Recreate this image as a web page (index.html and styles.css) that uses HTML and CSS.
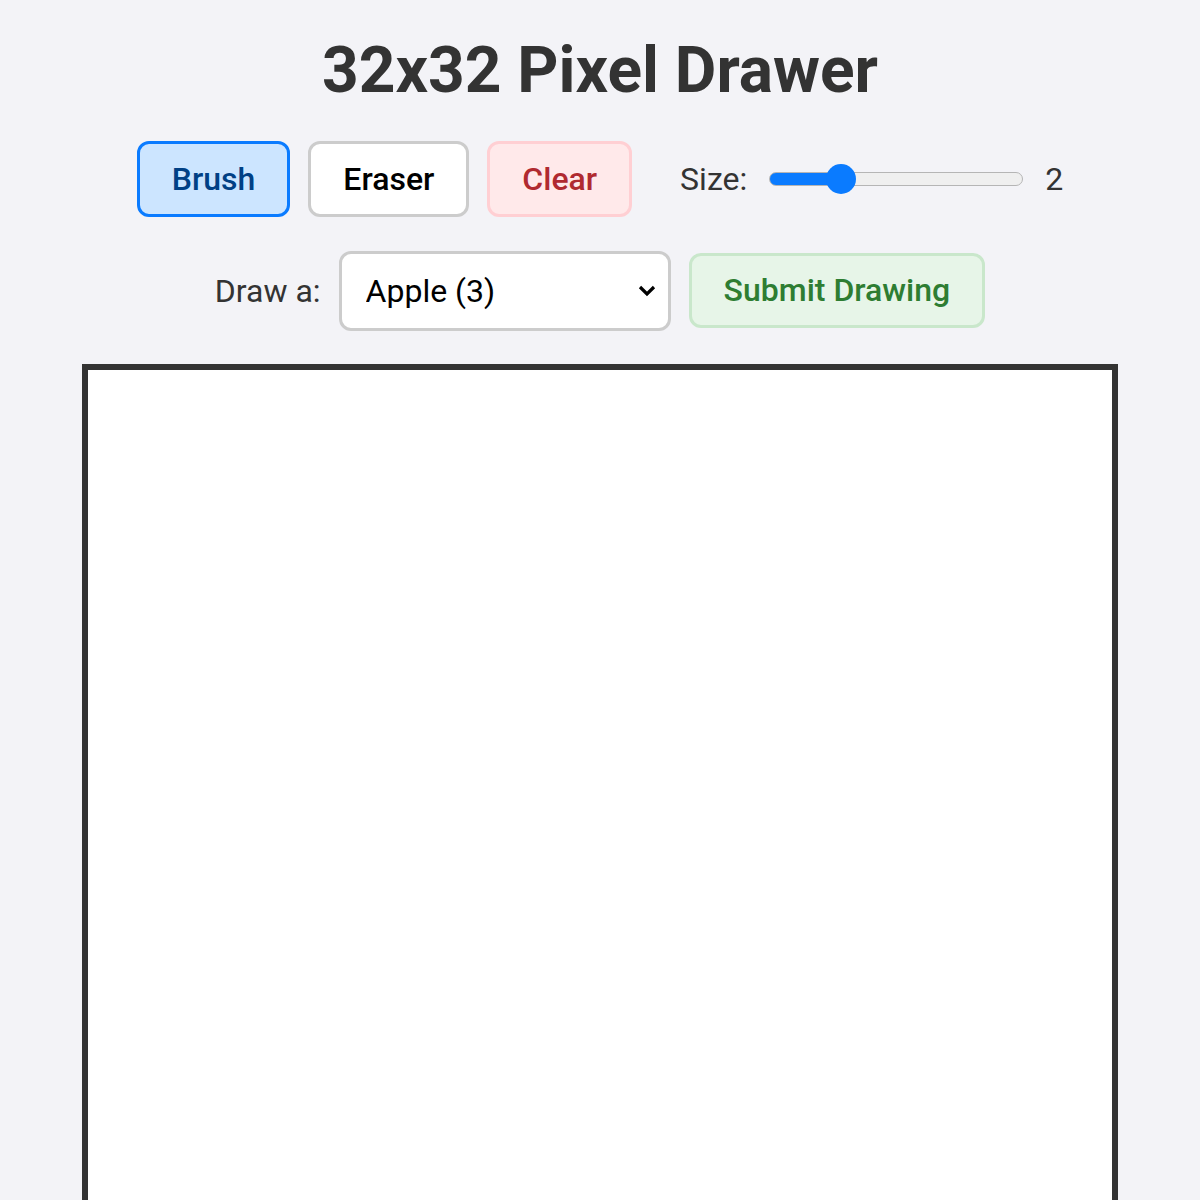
FILE: index.html
```html
<!DOCTYPE html>
<html lang="en">
<head>
    <meta charset="UTF-8">
    <meta name="viewport" content="width=device-width, initial-scale=1.0">
    <title>32x32 Pixel Drawer</title>
    <link rel="stylesheet" href="styles.css">
</head>
<body>
    <h1>32x32 Pixel Drawer</h1>

    <div class="controls">
        <button class="tool brush active">Brush</button>
        <button class="tool eraser">Eraser</button>
        <button class="tool clear">Clear</button>
        <div class="size-group">
            <label for="size">Size:</label>
            <input type="range" id="size" class="size-slider" min="1" max="5" value="2">
            <span class="size-value">2</span>
        </div>
    </div>

    <div class="controls prompt-row">
        <label for="target">Draw a:</label>
        <select id="target" class="target-select">
            <option>Apple (3)</option>
            <option>House (5)</option>
            <option>Smiley (2)</option>
        </select>
        <button class="tool submit">Submit Drawing</button>
    </div>

    <canvas id="board" class="board" width="32" height="32"></canvas>
</body>
</html>
```

FILE: styles.css
```css
:root {
    --page-bg: #f3f3f7;
    --ink: #333;
    --blue: #0a7bff;
}

body {
    margin: 0;
    background: var(--page-bg);
    color: var(--ink);
    font-family: Roboto, 'Noto Sans', sans-serif;
    display: flex;
    flex-direction: column;
    align-items: center;
}

h1 {
    font-size: 64px;
    font-weight: 700;
    line-height: 1.2;
    margin: 33px 0 31px;
    color: var(--ink);
}

.controls {
    display: flex;
    align-items: center;
    gap: 18px;
    font-size: 32px;
}

.prompt-row {
    margin-top: 34px;
}

.tool {
    font-family: inherit;
    font-size: 32px;
    font-weight: 500;
    line-height: 38px;
    padding: 16px 32px;
    border: 3px solid #ccc;
    border-radius: 12px;
    background: #fff;
    color: #000;
    cursor: pointer;
}

.brush.active {
    background: #cce5ff;
    border-color: var(--blue);
    color: #004085;
}

.clear {
    background: #ffe9ea;
    border-color: #ffcfd3;
    color: #b02a30;
}

.submit {
    background: #e7f5e8;
    border-color: #c9e7cb;
    color: #2e7d32;
    line-height: 37px;
}

.size-group {
    display: flex;
    align-items: center;
    gap: 22px;
    margin-left: 30px;
}

label {
    color: var(--ink);
}

.size-slider {
    -webkit-appearance: none;
    appearance: none;
    width: 254px;
    height: 14px;
    margin: 0;
    border: 1px solid #b5b5b5;
    border-radius: 7px;
    background: linear-gradient(to right, var(--blue) 0 28%, #efefef 28% 100%);
    box-sizing: border-box;
}

.size-slider::-webkit-slider-thumb {
    -webkit-appearance: none;
    width: 30px;
    height: 30px;
    border-radius: 50%;
    background: var(--blue);
    border: none;
}

.size-value {
    color: var(--ink);
}

.target-select {
    -webkit-appearance: none;
    appearance: none;
    font-family: inherit;
    font-size: 32px;
    width: 332px;
    height: 80px;
    padding: 0 24px;
    border: 3px solid #ccc;
    border-radius: 12px;
    background: #fff url("data:image/svg+xml;utf8,<svg xmlns='http://www.w3.org/2000/svg' width='18' height='12' viewBox='0 0 18 12'><path d='M2 2l7 7 7-7' fill='none' stroke='black' stroke-width='3.2'/></svg>") no-repeat right 12px center;
    color: #000;
}

.board {
    display: block;
    width: 1024px;
    height: 1024px;
    margin-top: 33px;
    border: 6px solid var(--ink);
    background: #fff;
    image-rendering: pixelated;
}
```
